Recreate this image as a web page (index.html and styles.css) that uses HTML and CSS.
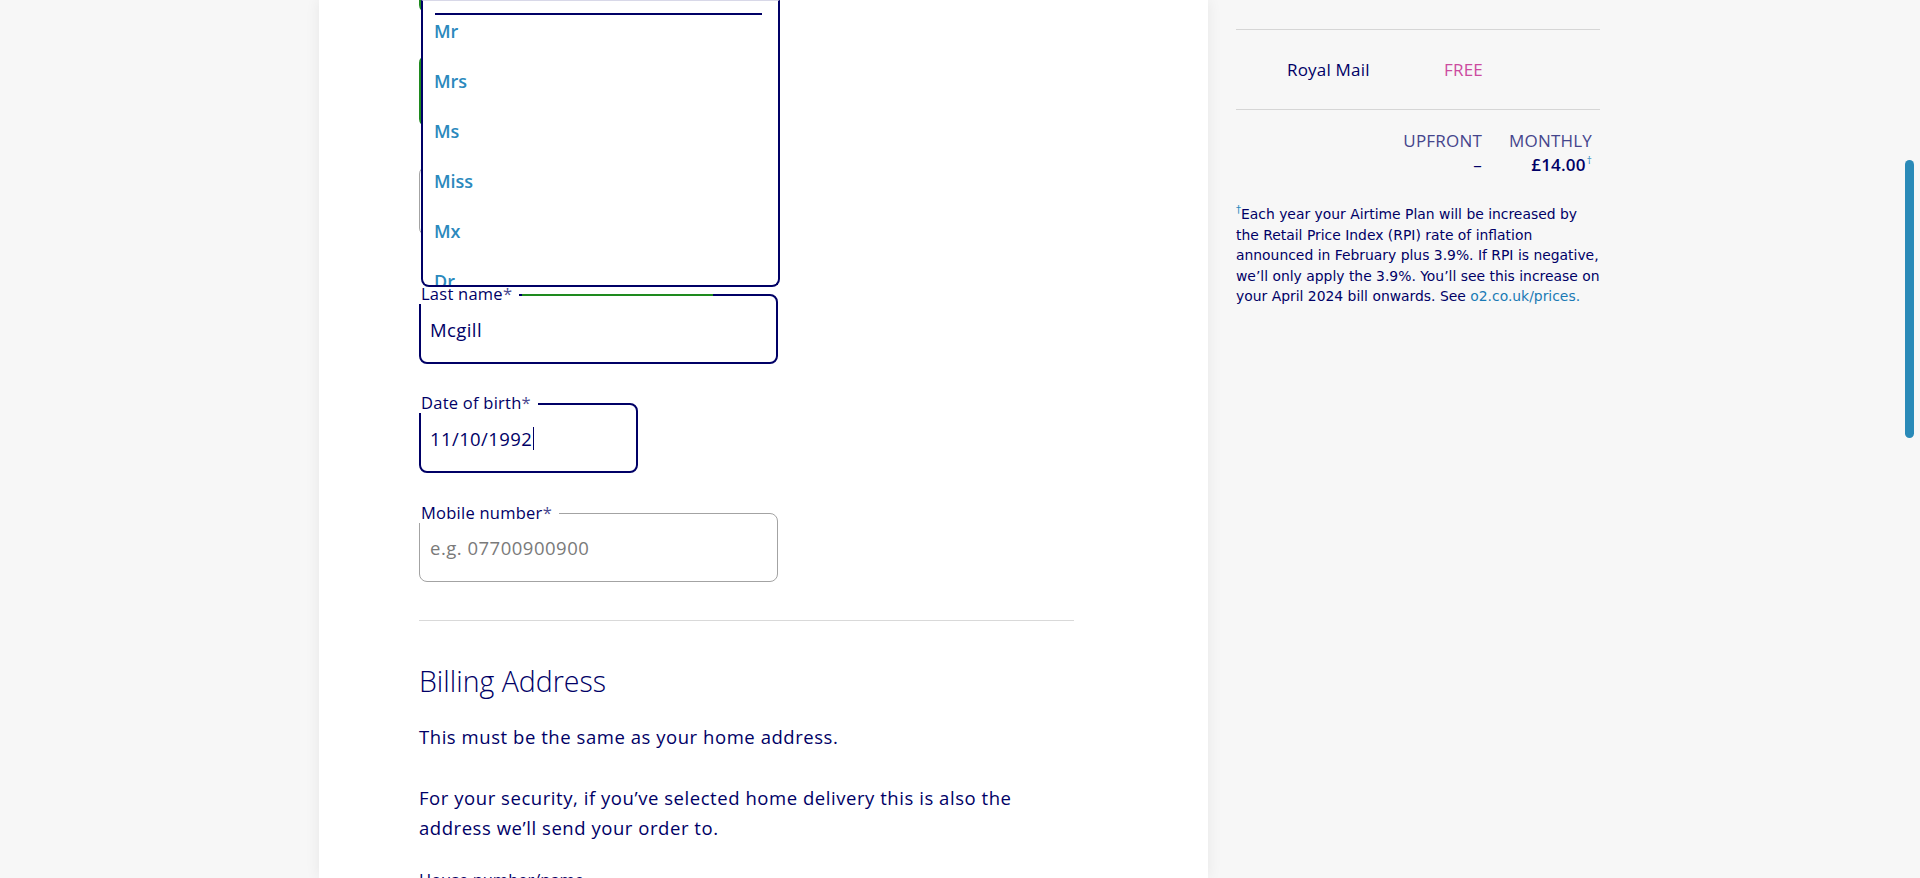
FILE: index.html
```html
<!DOCTYPE html>
<html lang="en">
<head>
<meta charset="utf-8">
<title>Checkout - Your details</title>
<link rel="stylesheet" href="styles.css">
</head>
<body>
<div class="page">
  <main class="card">
    <form class="form">
      <div class="field field-title"><div class="box box-valid"></div></div>
      <div class="field field-first"><div class="box box-valid"></div></div>
      <div class="field field-middle"><div class="box box-idle"></div></div>

      <div class="field field-last">
        <div class="box box-active">
          <span class="label">Last name<span class="req">*</span></span>
          <span class="notch-green"></span>
          <span class="value">Mcgill</span>
        </div>
      </div>

      <div class="field field-dob">
        <div class="box box-active">
          <span class="label">Date of birth<span class="req">*</span></span>
          <span class="value">11/10/1992<span class="caret"></span></span>
        </div>
      </div>

      <div class="field field-mobile">
        <div class="box box-idle">
          <span class="label">Mobile number<span class="req">*</span></span>
          <span class="placeholder">e.g. 07700900900</span>
        </div>
      </div>

      <hr class="divider">

      <h2 class="section-title">Billing Address</h2>
      <p class="copy">This must be the same as your home address.</p>
      <p class="copy">For your security, if you’ve selected home delivery this is also the address we’ll send your order to.</p>
      <p class="next-label">House number/name</p>
    </form>

    <div class="dropdown">
      <div class="dropdown-rule"></div>
      <ul class="options">
        <li>Mr</li>
        <li>Mrs</li>
        <li>Ms</li>
        <li>Miss</li>
        <li>Mx</li>
        <li>Dr</li>
      </ul>
    </div>
  </main>

  <aside class="summary">
    <hr class="sum-rule">
    <div class="delivery">
      <span class="delivery-name">Royal Mail</span>
      <span class="delivery-price">FREE</span>
    </div>
    <hr class="sum-rule">
    <div class="totals">
      <span class="th">UPFRONT</span>
      <span class="th">MONTHLY</span>
      <span class="td">–</span>
      <span class="td td-strong">£14.00<sup class="dag">†</sup></span>
    </div>
    <p class="note"><sup class="dag">†</sup>Each year your Airtime Plan will be increased by the Retail Price Index (RPI) rate of inflation announced in February plus 3.9%. If RPI is negative, we’ll only apply the 3.9%. You’ll see this increase on your April 2024 bill onwards. See <a class="link" href="#">o2.co.uk/prices.</a></p>
  </aside>
</div>
<div class="scrollbar"></div>
</body>
</html>
```
FILE: styles.css
```css
html, body {
  margin: 0;
  padding: 0;
  height: 100%;
  overflow: hidden;
}
body {
  background: #f7f7f7;
  font-family: "Open Sans", "Noto Sans", sans-serif;
  color: #000066;
}
.page {
  display: flex;
  height: 878px;
}
.card {
  position: relative;
  width: 889px;
  margin-left: 319px;
  background: #ffffff;
  box-shadow: 0 0 14px rgba(0, 0, 0, 0.07);
  overflow: hidden;
  padding-left: 100px;
  box-sizing: border-box;
}
.form {
  width: 655px;
  display: flex;
  flex-direction: column;
}
.field {
  position: relative;
}
.box {
  position: relative;
  box-sizing: border-box;
  height: 70px;
  border-radius: 8px;
  display: flex;
  align-items: center;
}
.field-title .box { margin-top: -57px; width: 358px; }
.field-first .box { margin-top: 42px; width: 358px; height: 72px; }
.field-middle .box { margin-top: 39px; width: 358px; }
.field-last { margin-top: 58px; width: 359px; }
.field-dob { margin-top: 39px; width: 219px; }
.field-mobile { margin-top: 40px; width: 359px; }
.field-mobile .box { height: 69px; }

.box-valid { border: 2px solid #1e8a1e; }
.box-idle { border: 1px solid #a3a3a3; }
.box-active { border: 2px solid #000066; }

.label {
  position: absolute;
  left: -2px;
  top: -12px;
  padding: 0 7px 0 2px;
  background: #ffffff;
  font-size: 16.5px;
  letter-spacing: 0.25px;
  line-height: 20px;
  color: #000066;
  white-space: nowrap;
}
.box-idle .label { left: -1px; top: -11px; }
.req { color: #4a4a90; }
.notch-green {
  position: absolute;
  top: -2px;
  left: 101px;
  width: 191px;
  height: 2px;
  background: #1e8a1e;
}
.value {
  padding-left: 9px;
  font-size: 18.5px;
  letter-spacing: 0.4px;
  color: #000066;
  display: flex;
  align-items: center;
}
.caret {
  display: inline-block;
  width: 1px;
  height: 23px;
  background: #000066;
  margin-left: 1px;
}
.placeholder {
  padding-left: 10px;
  font-size: 18.5px;
  letter-spacing: 0.5px;
  color: #7a7a7a;
}
.divider {
  margin: 38px 0 0 0;
  border: 0;
  border-top: 1px solid #d9d9d9;
  height: 0;
}
.section-title {
  margin: 43px 0 0 0;
  font-size: 28.5px;
  font-weight: 300;
  line-height: 34px;
  color: #000066;
}
.copy {
  margin: 0;
  max-width: 630px;
  font-size: 18.5px;
  letter-spacing: 0.55px;
  line-height: 30.5px;
  color: #000066;
}
.section-title + .copy { margin-top: 24px; }
.copy + .copy { margin-top: 30px; }
.next-label {
  margin: 26px 0 0 0;
  font-size: 16.5px;
  line-height: 20px;
  color: #000066;
}

.dropdown {
  position: absolute;
  top: 0;
  left: 102px;
  width: 359px;
  height: 287px;
  box-sizing: border-box;
  background: #ffffff;
  border: 2px solid #000066;
  border-top: 1px solid #d8d8e8;
  border-radius: 0 0 8px 8px;
  overflow: hidden;
}
.dropdown-rule {
  margin: 12px 16px 0 12px;
  height: 2px;
  background: #000066;
}
.options {
  list-style: none;
  margin: -9px 0 0 0;
  padding: 0 0 0 11px;
}
.options li {
  height: 50px;
  line-height: 50px;
  font-size: 18px;
  font-weight: 600;
  color: #2b89bd;
}

.summary {
  width: 366px;
  margin-left: 28px;
  display: flex;
  flex-direction: column;
}
.sum-rule {
  margin: 0 2px 0 0;
  border: 0;
  border-top: 1px solid #d6d6d6;
  height: 0;
}
.sum-rule:first-child { margin-top: 29px; }
.delivery {
  height: 79px;
  display: flex;
  align-items: center;
  padding-left: 51px;
  font-size: 17px;
  letter-spacing: 0.2px;
}
.delivery-name {
  width: 157px;
  color: #000066;
}
.delivery-price {
  color: #cc4b9f;
}
.totals {
  display: grid;
  grid-template-columns: auto auto;
  justify-content: end;
  column-gap: 27px;
  padding-right: 10px;
  margin-top: 19px;
  font-size: 17px;
  letter-spacing: 0.2px;
  line-height: 24px;
  text-align: right;
}
.th { color: #45458c; }
.td { color: #000066; }
.td-strong { font-weight: 600; }
.dag {
  color: #2b89bd;
  font-size: 10px;
  font-weight: 400;
  vertical-align: top;
  line-height: 14px;
  margin-left: 1px;
}
.note {
  margin: 27px 0 0 0;
  font-family: "DejaVu Sans", "Verdana", sans-serif;
  font-size: 13.9px;
  line-height: 20.5px;
  color: #000066;
}
.note .dag { margin-left: 0; line-height: 12px; }
.link {
  color: #1a7ab5;
  text-decoration: none;
}
.scrollbar {
  position: fixed;
  left: 1905px;
  top: 160px;
  width: 9px;
  height: 278px;
  border-radius: 5px;
  background: #2a8ab8;
}
```
